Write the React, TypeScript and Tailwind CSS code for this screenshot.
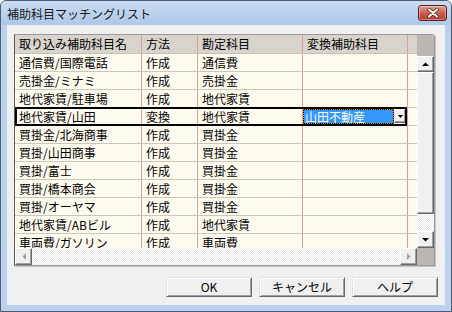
import React from "react";

const rows: string[][] = [
  ["通信費/国際電話", "作成", "通信費", ""],
  ["売掛金/ミナミ", "作成", "売掛金", ""],
  ["地代家賃/駐車場", "作成", "地代家賃", ""],
  ["地代家賃/山田", "変換", "地代家賃", "山田不動産"],
  ["買掛金/北海商事", "作成", "買掛金", ""],
  ["買掛/山田商事", "作成", "買掛金", ""],
  ["買掛/富士", "作成", "買掛金", ""],
  ["買掛/橋本商会", "作成", "買掛金", ""],
  ["買掛/オーヤマ", "作成", "買掛金", ""],
  ["地代家賃/ABビル", "作成", "地代家賃", ""],
  ["車両費/ガソリン", "作成", "車両費", ""],
];

const Arrow = ({ dir, color = "#000" }: { dir: "up" | "down" | "left" | "right"; color?: string }) => {
  const pts: Record<string, string> = {
    up: "0,4 7,4 3.5,0.5",
    down: "0,0 7,0 3.5,3.5",
    left: "4,0 4,7 0.5,3.5",
    right: "0,0 0,7 3.5,3.5",
  };
  const horiz = dir === "up" || dir === "down";
  return (
    <svg width={horiz ? 7 : 4} height={horiz ? 4 : 7} viewBox={horiz ? "0 0 7 4" : "0 0 4 7"}>
      <polygon points={pts[dir]} fill={color} />
    </svg>
  );
};

const btn3d =
  "bg-[#f0f0f0] border border-t-white border-l-white border-r-[#696969] border-b-[#696969] shadow-[inset_-1px_-1px_0_#a0a0a0]";

const checker =
  "bg-[image:repeating-conic-gradient(#ffffff_0_25%,#e9e9e9_0_50%)] bg-[length:2px_2px]";

export default function App() {
  return (
    <div
      className="w-[452px] h-[312px] flex flex-col bg-[#b9d1ee] border border-[#4f5d70] rounded-t-[6px] overflow-hidden"
      style={{ fontFamily: '"Noto Sans CJK JP", "Noto Sans", sans-serif' }}
    >
      {/* Title bar */}
      <div className="h-[24px] flex items-center justify-between pl-[6px] pr-[4px] bg-gradient-to-b from-[#cadcf2] to-[#adc8e9]">
        <span className="text-[12px] leading-none text-[#1a1a1a] mt-[1px]">補助科目マッチングリスト</span>
        <div className="w-[29px] h-[16px] mt-[-1px] rounded-[3px] border border-[#5e1e1a] bg-gradient-to-b from-[#e2a295] via-[#cc5f50] to-[#b8382a] flex items-center justify-center shadow-[inset_0_0_0_1px_rgba(255,255,255,0.35)]">
          <svg width="12" height="10" viewBox="0 0 12 10">
            <path d="M2 1.5 L10 8.5 M10 1.5 L2 8.5" stroke="#5a1a14" strokeWidth="3.6" strokeLinecap="round" />
            <path d="M2 1.5 L10 8.5 M10 1.5 L2 8.5" stroke="#ffffff" strokeWidth="2.2" strokeLinecap="round" />
          </svg>
        </div>
      </div>

      {/* Client area */}
      <div className="flex-1 mx-[6px] mb-[6px] bg-[#f0f0f0] flex flex-col">
        {/* Grid */}
        <div className="ml-[7px] mt-[9px] w-[421px] h-[232px] border border-t-[#9a9a9a] border-l-[#5a5a5a] border-r-[#9a9a9a] border-b-[#9a9a9a] rounded-tr-[3px] shadow-[1px_1px_0_#c4c4c4] flex overflow-hidden text-[12px] text-black">
          {/* left part */}
          <div className="w-[402px] flex flex-col">
            {/* header */}
            <div className="h-[19px] flex bg-[#d8d4cc] border-b border-[#c6c2b8] shrink-0">
              <div className="w-[127px] pl-[4px] border-r border-[#d5a29a] leading-[18px]">取り込み補助科目名</div>
              <div className="w-[56px] pl-[4px] border-r border-[#d5a29a] leading-[18px]">方法</div>
              <div className="w-[105px] pl-[4px] border-r border-[#d5a29a] leading-[18px]">勘定科目</div>
              <div className="w-[105px] pl-[4px] border-r border-[#d5a29a] leading-[18px]">変換補助科目</div>
              <div className="flex-1" />
            </div>
            {/* body */}
            <div className="flex-1 overflow-hidden bg-[#fffbef]">
              {rows.map((r, i) => {
                const sel = i === 3;
                return (
                  <div key={i} className="h-[18px] flex border-b border-[#cbc7bc] relative">
                    <div className="w-[127px] pl-[4px] border-r border-[#d5a29a] leading-[17px] whitespace-nowrap">{r[0]}</div>
                    <div className="w-[56px] pl-[4px] border-r border-[#d5a29a] leading-[17px]">{r[1]}</div>
                    <div className="w-[105px] pl-[4px] border-r border-[#d5a29a] leading-[17px]">{r[2]}</div>
                    <div className="w-[105px] border-r border-[#d5a29a] leading-[17px] relative">
                      {sel && (
                        <div className="absolute left-0 top-[1px] w-[104px] h-[15px] flex">
                          <div className="w-[91px] h-[15px] bg-black border border-dotted border-[#d08a2a]">
                            <div className="w-full h-full bg-[#3399ff] text-white leading-[13px] pl-[1px] whitespace-nowrap">{r[3]}</div>
                          </div>
                          <div className={`w-[12px] h-[14px] ${btn3d} flex items-center justify-center`}>
                            <svg width="5" height="3" viewBox="0 0 5 3">
                              <polygon points="0,0 5,0 2.5,3" fill="#000" />
                            </svg>
                          </div>
                        </div>
                      )}
                    </div>
                    <div className="flex-1" />
                    {sel && (
                      <div className="absolute left-0 top-[-1px] w-[392px] h-[19px] border-2 border-black pointer-events-none" />
                    )}
                  </div>
                );
              })}
            </div>
            {/* horizontal scrollbar */}
            <div className={`h-[17px] shrink-0 flex ${checker}`}>
              <div className={`w-[17px] h-[17px] ${btn3d} flex items-center justify-center`}>
                <Arrow dir="left" color="#a0a0a0" />
              </div>
              <div className="flex-1" />
              <div className={`w-[17px] h-[17px] ${btn3d} flex items-center justify-center`}>
                <Arrow dir="right" color="#a0a0a0" />
              </div>
            </div>
          </div>
          {/* vertical scrollbar column */}
          <div className="w-[17px] flex flex-col">
            <div className="h-[21px] bg-[#bbb8b1] shrink-0" />
            <div className={`flex-1 flex flex-col ${checker}`}>
              <div className={`h-[16px] shrink-0 ${btn3d} flex items-center justify-center`}>
                <Arrow dir="up" />
              </div>
              <div className={`h-[142px] shrink-0 ${btn3d}`} />
              <div className="flex-1" />
              <div className={`h-[17px] shrink-0 ${btn3d} flex items-center justify-center`}>
                <Arrow dir="down" />
              </div>
            </div>
            <div className="h-[17px] bg-[#bbb8b1] shrink-0" />
          </div>
        </div>

        {/* Buttons */}
        <div className="mt-[11px] flex justify-end gap-[7px] pr-[7px]">
          {["OK", "キャンセル", "ヘルプ"].map((t) => (
            <div
              key={t}
              className="w-[86px] h-[20px] flex items-center justify-center text-[12px] text-black bg-[#f0f0f0] border border-t-[#e3e3e3] border-l-[#e3e3e3] border-r-[#696969] border-b-[#696969] shadow-[inset_1px_1px_0_#ffffff,inset_-1px_-1px_0_#a0a0a0]"
            >
              {t}
            </div>
          ))}
        </div>
      </div>
    </div>
  );
}
